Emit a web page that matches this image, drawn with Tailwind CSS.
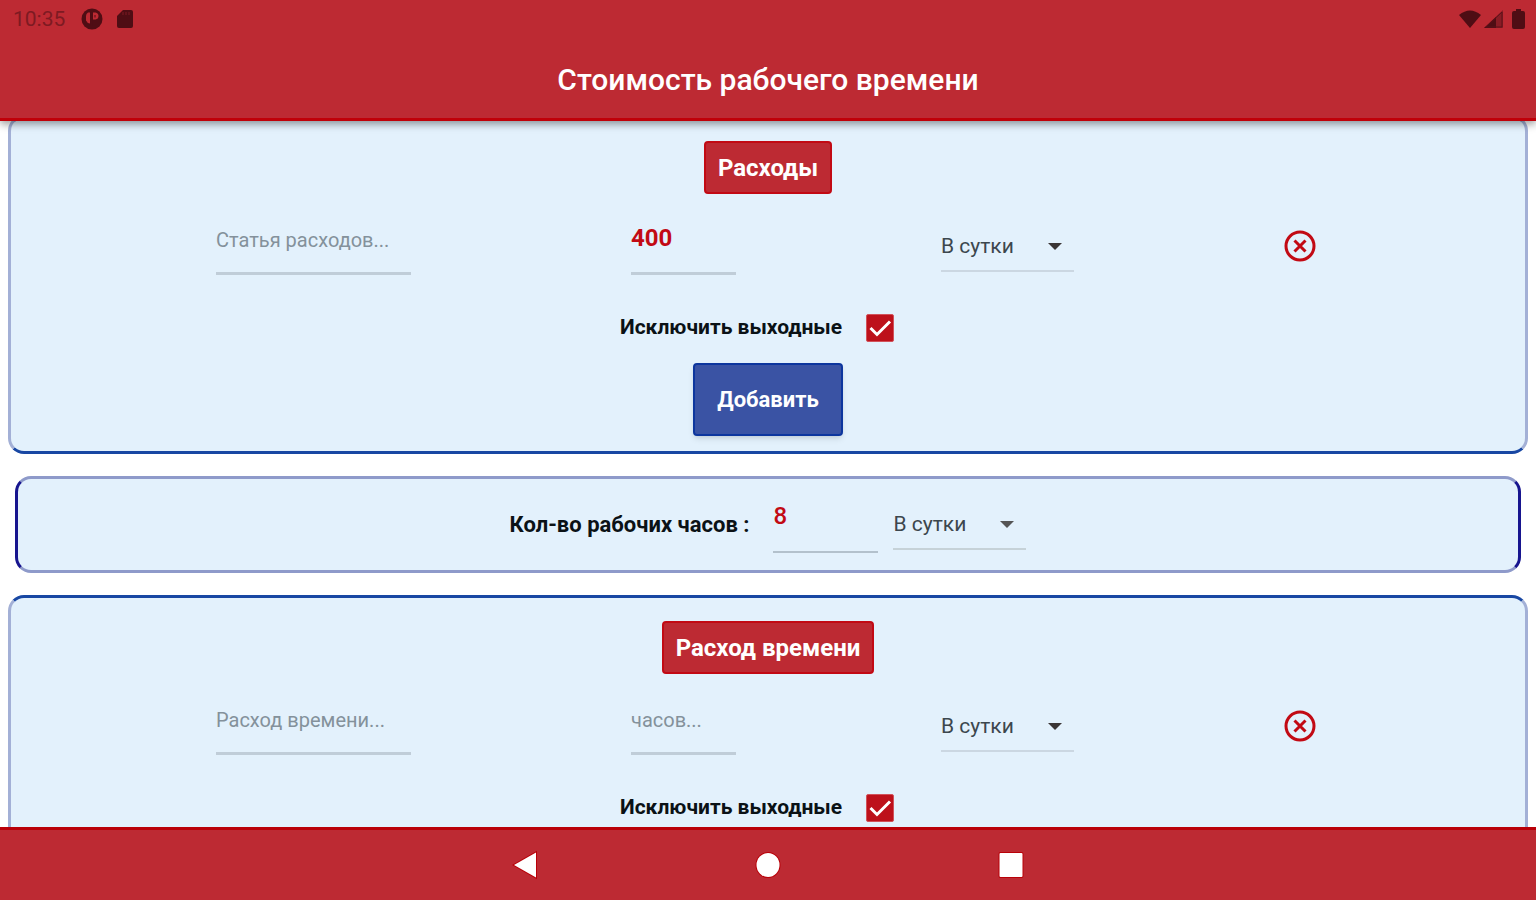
<!DOCTYPE html>
<html lang="ru">

<head>
  <meta charset="UTF-8">
  <meta name="viewport" content="width=device-width, initial-scale=1.0">
  <title>Стоимость рабочего времени</title>
  <script src="https://cdn.jsdelivr.net/npm/@tailwindcss/browser@4"></script>
</head>

<body class="h-screen flex flex-col overflow-hidden bg-white font-['Roboto','Liberation_Sans',sans-serif] text-[#0b1216]">
  <!-- Header -->
  <header class="relative z-10 shrink-0 bg-[#bd2a33] border-b-3 border-[#c00009] shadow-[0_3px_8px_rgba(0,0,0,0.4)]">
    <div class="h-[38px] px-[11px] flex items-center justify-between text-[#4f0d14]">
      <div class="flex items-center">
        <span class="w-[70px] pl-[2px] text-[21px] leading-6 text-[#7e1a22]">10:35</span>
        <svg class="w-[22px] h-[22px]" viewBox="0 0 22 22">
          <circle cx="11" cy="11" r="10.5" fill="currentColor" />
          <path d="M9 4.500H7Q5 5.500 5 8V12.500Q6 15 9 15.500ZM12 4.500H14.500Q17.500 5 17.500 8T14.500 11.500H12Z" fill="#bd2a33" />
          <path d="M10.500 4V18" stroke="#4f0d14" stroke-width="2" />
          <path d="M14 7V9.500" stroke="#4f0d14" stroke-width="1" />
        </svg>
        <svg class="w-4 h-5 ml-[14px]" viewBox="0 0 16 20">
          <path d="M6 1H14Q16 1 16 3V17Q16 19 14 19H2Q0 19 0 17V7Z" fill="currentColor" />
          <path d="M6 3V6M9 3V6M12 3V6" stroke="#7e1a22" stroke-width="1" />
        </svg>
      </div>
      <div class="flex items-center">
        <svg class="w-[22px] h-[18px]" viewBox="0 0 22 18">
          <path d="M0 5Q11-4 22 5L11 18Z" fill="currentColor" />
        </svg>
        <svg class="w-[19px] h-[18px] ml-[3px]" viewBox="0 0 19 18">
          <path d="M19 0V18H0Z" fill="#8a1c25" />
          <path d="M12 7V18H0Z" fill="currentColor" />
          <path d="M18 2V17H2Z" fill="none" stroke="#5c1018" stroke-width="1" />
        </svg>
        <svg class="w-[13px] h-5 ml-[9px]" viewBox="0 0 13 20">
          <path d="M4 0H9V2H11Q13 2 13 4V18Q13 20 11 20H2Q0 20 0 18V4Q0 2 2 2H4Z" fill="currentColor" />
        </svg>
      </div>
    </div>
    <h1 class="h-20 pt-1 flex items-center justify-center text-[30px] leading-10 font-medium text-white">Стоимость рабочего времени</h1>
  </header>

  <!-- Scrolled list -->
  <main class="flex-1 min-h-0 overflow-hidden">
    <div class="-mt-[6px] flex flex-col gap-[22px]">
      <!-- Expenses -->
      <section class="mx-2 pt-[23px] pb-[15px] flex flex-col items-center rounded-2xl bg-[#e3f1fc] border-3 border-x-[#a3b0d6] border-y-[#1847a3]">
        <button class="h-[53px] px-3 rounded-sm border-2 border-[#c20a14] bg-[#bd2a33] text-2xl font-bold text-white">Расходы</button>
        <div class="self-stretch h-[58px] mt-[23px] flex items-center justify-evenly">
          <input type="text" aria-label="Статья расходов" placeholder="Статья расходов..."
            class="w-[195px] h-[58px] mr-[15px] pb-[10px] border-b-3 border-[#c0cdd8] text-xl placeholder:text-[#84919b] outline-none">
          <input type="text" aria-label="Сумма" value="400"
            class="w-[105px] h-[58px] pb-[14px] border-b-3 border-[#c0cdd8] text-2xl font-bold text-[#c20a14] outline-none">
          <div class="relative">
            <select aria-label="Период" class="w-[133px] h-[51px] pt-1 appearance-none border-b-2 border-[#cbd7e2] text-[21px] text-[#3c464d] outline-none">
              <option>В сутки</option>
            </select>
            <svg class="absolute right-3 top-[22px] w-[14px] h-[7px] pointer-events-none" viewBox="0 0 14 7">
              <path d="M0 0H14L7 7Z" fill="#3a3535" />
            </svg>
          </div>
          <button aria-label="Удалить" class="w-[41px] flex justify-center">
            <svg class="w-8 h-8" viewBox="0 0 32 32" fill="none" stroke="#c20a14" stroke-width="3">
              <circle cx="16" cy="16" r="14" />
              <path d="M10.500 10.500L21.500 21.500M21.500 10.500L10.500 21.500" />
            </svg>
          </button>
        </div>
        <label class="mt-[39px] mr-[22px] h-7 flex items-center gap-6 text-[21px] font-bold">
          Исключить выходные
          <span class="relative w-7 h-7">
            <input type="checkbox" checked class="block w-7 h-7 appearance-none rounded-xs border border-[#d2525a] bg-[#bd111b]">
            <svg class="absolute inset-0 w-7 h-7 pointer-events-none" viewBox="0 0 28 28">
              <path d="M4.500 14L11 20.500L24 7.500" fill="none" stroke="#fff" stroke-width="3" />
            </svg>
          </span>
        </label>
        <button class="mt-[21px] h-[73px] px-[22px] rounded-sm border-2 border-[#0d369e] bg-[#3a53a4] text-[22px] font-bold text-white shadow-md">Добавить</button>
      </section>

      <!-- Working hours -->
      <section class="mx-[15px] pt-4 pb-[17px] flex items-center justify-center rounded-2xl bg-[#e3f1fc] border-3 border-x-[#17158f] border-y-[#8e9aca]">
        <label for="hours" class="mr-6 text-[22px] font-bold">Кол-во рабочих часов :</label>
        <input id="hours" type="text" value="8"
          class="w-[105px] h-[58px] mr-[15px] pb-[14px] border-b-2 border-[#b3c1cc] text-2xl font-medium text-[#c20a14] outline-none">
        <div class="relative">
          <select aria-label="Период" class="w-[133px] h-[51px] pt-1 appearance-none border-b-2 border-[#c6d2d8] text-[21px] text-[#3c464d] outline-none">
            <option>В сутки</option>
          </select>
          <svg class="absolute right-3 top-[22px] w-[14px] h-[7px] pointer-events-none" viewBox="0 0 14 7">
            <path d="M0 0H14L7 7Z" fill="#555" />
          </svg>
        </div>
      </section>

      <!-- Time spent -->
      <section class="mx-2 pt-[23px] pb-[15px] flex flex-col items-center rounded-2xl bg-[#e3f1fc] border-3 border-x-[#a3b0d6] border-y-[#1847a3]">
        <button class="h-[53px] px-3 rounded-sm border-2 border-[#c20a14] bg-[#bd2a33] text-2xl font-bold text-white">Расход времени</button>
        <div class="self-stretch h-[58px] mt-[23px] flex items-center justify-evenly">
          <input type="text" aria-label="Расход времени" placeholder="Расход времени..."
            class="w-[195px] h-[58px] mr-[15px] pb-[10px] border-b-3 border-[#c0cdd8] text-xl placeholder:text-[#84919b] outline-none">
          <input type="text" aria-label="часов" placeholder="часов..."
            class="w-[105px] h-[58px] pb-[10px] border-b-3 border-[#c0cdd8] text-xl placeholder:text-[#84919b] outline-none">
          <div class="relative">
            <select aria-label="Период" class="w-[133px] h-[51px] pt-1 appearance-none border-b-2 border-[#cbd7e2] text-[21px] text-[#3c464d] outline-none">
              <option>В сутки</option>
            </select>
            <svg class="absolute right-3 top-[22px] w-[14px] h-[7px] pointer-events-none" viewBox="0 0 14 7">
              <path d="M0 0H14L7 7Z" fill="#3a3535" />
            </svg>
          </div>
          <button aria-label="Удалить" class="w-[41px] flex justify-center">
            <svg class="w-8 h-8" viewBox="0 0 32 32" fill="none" stroke="#c20a14" stroke-width="3">
              <circle cx="16" cy="16" r="14" />
              <path d="M10.500 10.500L21.500 21.500M21.500 10.500L10.500 21.500" />
            </svg>
          </button>
        </div>
        <label class="mt-[39px] mr-[22px] mb-8 h-7 flex items-center gap-6 text-[21px] font-bold">
          Исключить выходные
          <span class="relative w-7 h-7">
            <input type="checkbox" checked class="block w-7 h-7 appearance-none rounded-xs border border-[#d2525a] bg-[#bd111b]">
            <svg class="absolute inset-0 w-7 h-7 pointer-events-none" viewBox="0 0 28 28">
              <path d="M4.500 14L11 20.500L24 7.500" fill="none" stroke="#fff" stroke-width="3" />
            </svg>
          </span>
        </label>
      </section>
    </div>
  </main>

  <!-- Navigation bar -->
  <nav class="shrink-0 h-[73px] flex items-center justify-center bg-[#bd2a33] border-t-3 border-[#b90008]">
    <button aria-label="Назад" class="w-[243px] flex justify-center">
      <svg class="w-[26px] h-[30px]" viewBox="0 0 26 30">
        <path d="M24 2.500V27.500L2 15Z" fill="#fff" stroke="#b90008" stroke-width="2" paint-order="stroke" />
      </svg>
    </button>
    <button aria-label="Домой" class="w-[243px] flex justify-center">
      <svg class="w-[26px] h-[30px]" viewBox="0 0 26 30">
        <ellipse cx="13" cy="15" rx="11.500" ry="12" fill="#fff" stroke="#b90008" stroke-width="2" paint-order="stroke" />
      </svg>
    </button>
    <button aria-label="Обзор" class="w-[243px] flex justify-center">
      <svg class="w-[26px] h-[30px]" viewBox="0 0 26 30">
        <rect x="1.500" y="3" width="23" height="24" rx="1" fill="#fff" stroke="#b90008" stroke-width="2" paint-order="stroke" />
      </svg>
    </button>
  </nav>
</body>

</html>
